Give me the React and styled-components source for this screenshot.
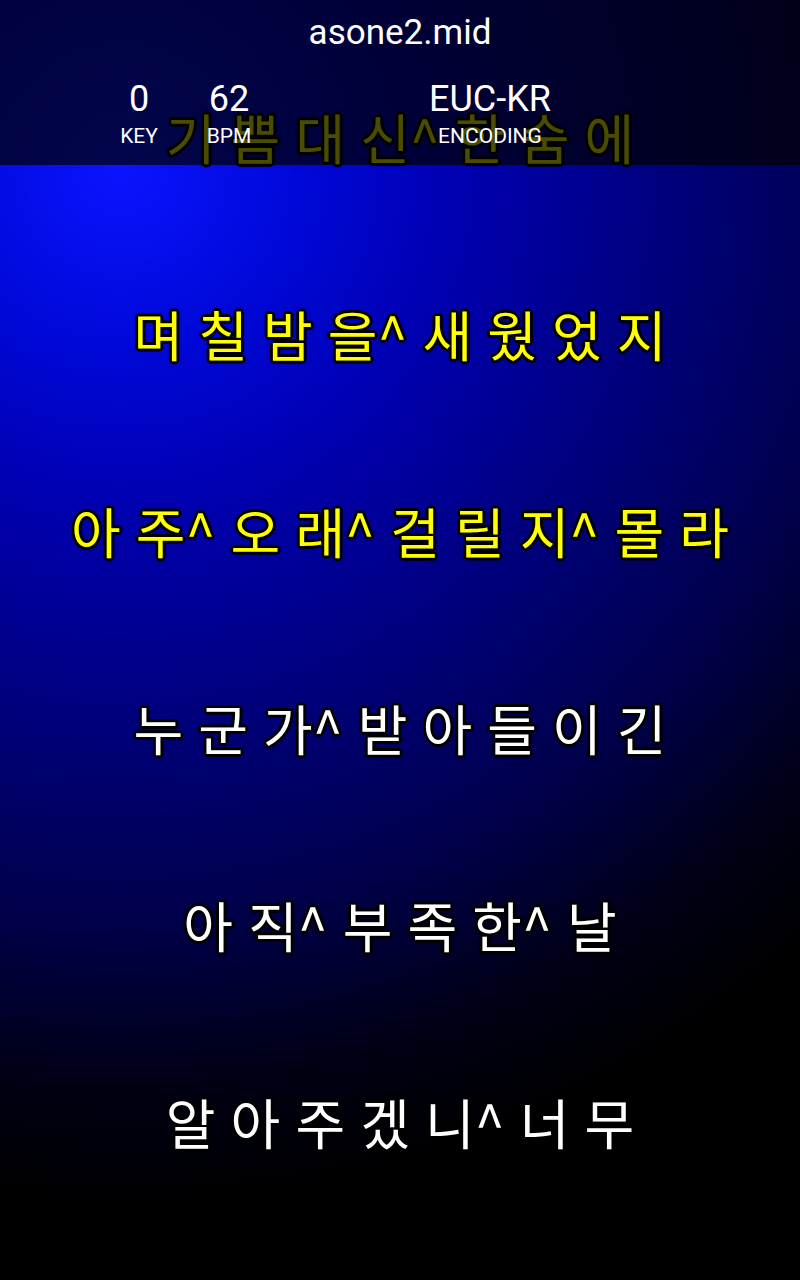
import React from 'react';
import styled, { createGlobalStyle } from 'styled-components';

const GlobalStyle = createGlobalStyle`
  html, body {
    margin: 0;
    padding: 0;
    background: #000;
  }
`;

const Screen = styled.div`
  position: relative;
  width: 800px;
  height: 1280px;
  overflow: hidden;
  background: radial-gradient(
    circle at 120px 168px,
    #0a14ff 0px,
    #0008d8 180px,
    #0000b0 340px,
    #00007a 560px,
    #000048 760px,
    #000014 920px,
    #000 1040px
  );
`;

const Header = styled.header`
  position: absolute;
  top: 0;
  left: 0;
  right: 0;
  height: 165px;
  z-index: 1;
  box-sizing: border-box;
  padding-top: 15px;
  background: rgba(0, 0, 0, 0.7);
  color: #fff;
  font-family: Roboto, "Liberation Sans", sans-serif;
`;

const Title = styled.div`
  font-size: 35px;
  line-height: 1;
  text-align: center;
`;

const StatsRow = styled.div`
  display: grid;
  grid-template-columns: 80px 100px 131px 160px;
  padding-left: 99px;
  margin-top: 31px;
`;

const Stat = styled.div`
  grid-column: ${({ $col }) => $col};
  display: flex;
  flex-direction: column;
  align-items: center;
`;

const StatValue = styled.div`
  font-size: 36px;
  line-height: 1;
`;

const StatLabel = styled.div`
  font-size: 21px;
  line-height: 1;
  margin-top: 9px;
`;

const LyricsList = styled.div`
  display: flex;
  flex-direction: column;
  padding-top: 38px;
`;

const LyricRow = styled.div`
  height: 197px;
  display: flex;
  align-items: center;
  justify-content: center;
`;

const LyricText = styled.div`
  font-family: "Noto Sans CJK KR", "Noto Sans", sans-serif;
  font-size: 54px;
  font-weight: 400;
  line-height: 1;
  word-spacing: 3px;
  white-space: pre;
  color: ${({ $sung }) => ($sung ? '#ffff00' : '#ffffff')};
  text-shadow:
    -2px -2px 0 #000, 2px -2px 0 #000, -2px 2px 0 #000, 2px 2px 0 #000,
    0 -3px 0 #000, 0 3px 0 #000, -3px 0 0 #000, 3px 0 0 #000,
    0 0 4px #000;
`;

const lyrics = [
  { text: '기 쁨 대 신^ 한 숨 에', sung: true },
  { text: '며 칠 밤 을^ 새 웠 었 지', sung: true },
  { text: '아 주^ 오 래^ 걸 릴 지^ 몰 라', sung: true },
  { text: '누 군 가^ 받 아 들 이 긴', sung: false },
  { text: '아 직^ 부 족 한^ 날', sung: false },
  { text: '알 아 주 겠 니^ 너 무', sung: false },
];

const stats = [
  { value: '0', label: 'KEY', col: 1 },
  { value: '62', label: 'BPM', col: 2 },
  { value: 'EUC-KR', label: 'ENCODING', col: 4 },
];

export default function App() {
  return (
    <>
      <GlobalStyle />
      <Screen>
        <Header>
          <Title>asone2.mid</Title>
          <StatsRow>
            {stats.map((s) => (
              <Stat key={s.label} $col={s.col}>
                <StatValue>{s.value}</StatValue>
                <StatLabel>{s.label}</StatLabel>
              </Stat>
            ))}
          </StatsRow>
        </Header>
        <LyricsList>
          {lyrics.map((line, i) => (
            <LyricRow key={i}>
              <LyricText $sung={line.sung}>{line.text}</LyricText>
            </LyricRow>
          ))}
        </LyricsList>
      </Screen>
    </>
  );
}
